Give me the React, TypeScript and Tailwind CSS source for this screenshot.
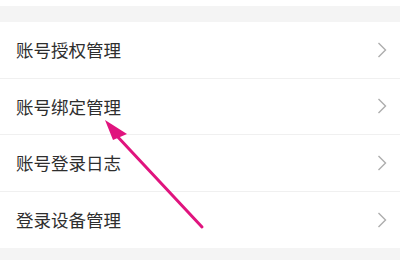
import React from "react";

const items = ["账号授权管理", "账号绑定管理", "账号登录日志", "登录设备管理"];

function Chevron() {
  return (
    <svg width="10" height="16" viewBox="0 0 10 16" fill="none">
      <path d="M1.5 1 L8.5 8 L1.5 15" stroke="#adadad" strokeWidth="1.4" />
    </svg>
  );
}

export default function App() {
  return (
    <div className="relative w-[400px] h-[260px] overflow-hidden bg-white" style={{ fontFamily: '"Noto Sans CJK SC", "Noto Sans", sans-serif' }}>
      <div className="h-[6px] bg-white" />
      <div className="h-[16px] bg-[#f4f4f4]" />
      <div className="flex flex-col">
        {items.map((t, i) => (
          <div key={t} className={`flex items-center justify-between h-[56.5px] pl-4 pr-[13px] ${i < items.length - 1 ? "border-b border-[#f0f0f0]" : ""}`}>
            <span className="text-[17.5px] text-[#2e2e2e] leading-none">{t}</span>
            <Chevron />
          </div>
        ))}
      </div>
      <div className="h-[14px] bg-[#f4f4f4]" />
      <svg className="absolute left-0 top-0" width="400" height="260" viewBox="0 0 400 260">
        <line x1="202" y1="227" x2="116" y2="135" stroke="#e0147e" strokeWidth="3" strokeLinecap="round" />
        <polygon points="105,120 127,134 113,140" fill="#e0147e" />
      </svg>
    </div>
  );
}
